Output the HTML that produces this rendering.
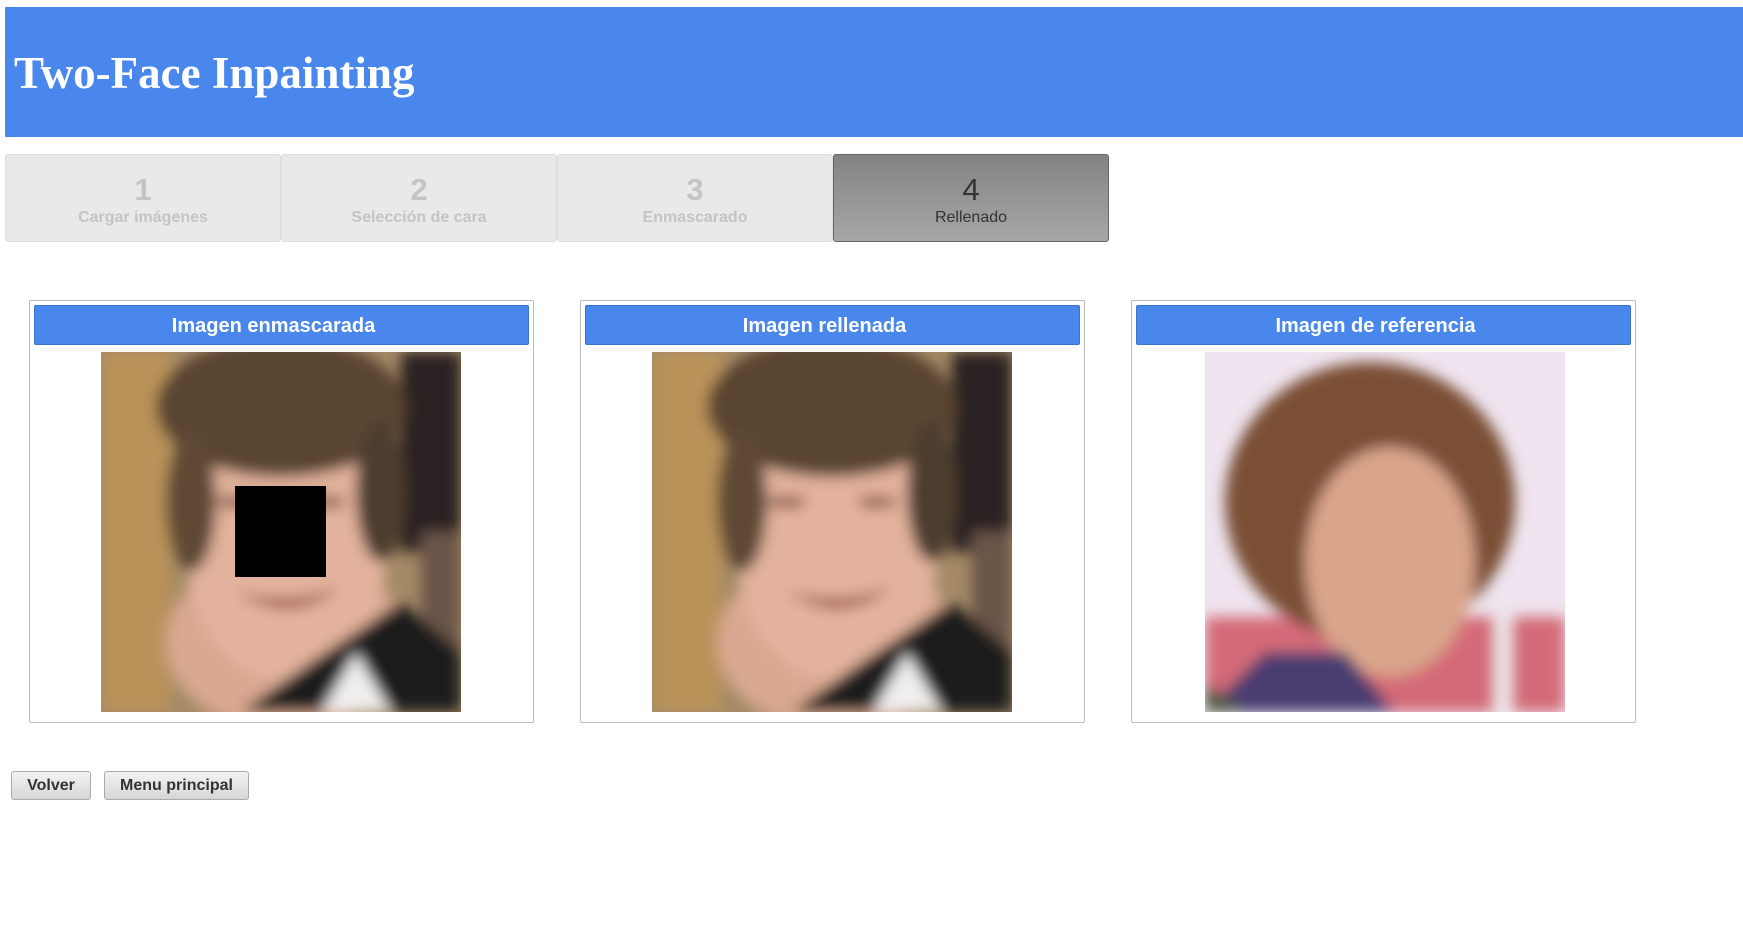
<!DOCTYPE html>
<html><head><meta charset="utf-8"><style>
*{box-sizing:border-box}
body{margin:0;width:1743px;height:952px;background:#fff;font-family:"Liberation Sans",sans-serif;position:relative;overflow:hidden}
.hdr{position:absolute;left:5px;top:7px;width:1738px;height:130px;background:#4987ec}
.hdr h1{margin:0;position:absolute;left:9px;top:40px;font-family:"Liberation Serif",serif;font-size:45px;font-weight:bold;color:#fff;line-height:52px}
.step{position:absolute;top:154px;height:88px;width:276px;background:#e9e9e9;border:1px solid #dedede;border-radius:3px;text-align:center;color:#c4c4c4}
.step .n{position:absolute;left:0;right:0;top:17px;font-size:31px;line-height:36px}
.step .l{position:absolute;left:0;right:0;top:53px;font-size:16px;line-height:20px}
.step.act{background:linear-gradient(#838383,#a7a7a7);border-color:#666;color:#333}
.panel{position:absolute;top:300px;width:505px;height:423px;border:1px solid #bbb;border-radius:2px}
.panel .t{position:absolute;left:4px;right:4px;top:4px;height:40px;background:#4987ec;border:1px solid #3a72cc;border-radius:2px;color:#fff;font-weight:bold;font-size:20px;text-align:center;line-height:41px;padding-right:16px}
.panel svg{position:absolute;top:51px;left:71px}
.btn{position:absolute;top:771px;height:29px;border:1px solid #aaa;border-radius:3px;background:linear-gradient(#f3f3f3,#d6d6d6);font-weight:bold;font-size:16px;color:#333;text-align:center;line-height:27px}
</style></head><body>
<div class="hdr"><h1>Two-Face Inpainting</h1></div>
<div class="step" style="left:5px"><div class="n" style="font-weight:bold">1</div><div class="l" style="font-weight:bold">Cargar imágenes</div></div>
<div class="step" style="left:281px"><div class="n" style="font-weight:bold">2</div><div class="l" style="font-weight:bold">Selección de cara</div></div>
<div class="step" style="left:557px"><div class="n" style="font-weight:bold">3</div><div class="l" style="font-weight:bold">Enmascarado</div></div>
<div class="step act" style="left:833px"><div class="n">4</div><div class="l">Rellenado</div></div>

<svg width="0" height="0" style="position:absolute"><defs>
<filter id="bl"><feGaussianBlur stdDeviation="7"/></filter>
<symbol id="face1" viewBox="0 0 360 360">
<rect width="360" height="360" fill="#a48a66"/>
<g filter="url(#bl)">
<rect x="0" y="0" width="70" height="360" fill="#b9925a"/>
<rect x="300" y="0" width="60" height="200" fill="#2a2420"/>
<rect x="320" y="180" width="40" height="180" fill="#6a5548"/>
<ellipse cx="185" cy="290" rx="120" ry="90" fill="#d8a890"/>
<ellipse cx="185" cy="200" rx="100" ry="130" fill="#e2b29c"/>
<ellipse cx="180" cy="55" rx="125" ry="70" fill="#5a4430"/>
<ellipse cx="90" cy="150" rx="25" ry="70" fill="#5e4836"/>
<ellipse cx="280" cy="140" rx="25" ry="70" fill="#4e3c2e"/>
<ellipse cx="135" cy="150" rx="20" ry="6" fill="#8a5a48"/>
<ellipse cx="225" cy="150" rx="20" ry="6" fill="#8a5a48"/>
<path d="M140 360 L210 310 L300 250 L360 300 L360 360Z" fill="#1f1c1c"/>
<path d="M220 360 L255 300 L290 360Z" fill="#f0eeee"/>
<path d="M135 240 Q190 275 240 235 Q190 255 135 240Z" fill="#9a4f4a"/>
</g>
</symbol>
<symbol id="face2" viewBox="0 0 360 360">
<rect width="360" height="360" fill="#efe4ef"/>
<g filter="url(#bl)">
<rect x="0" y="265" width="360" height="95" fill="#d46a78"/>
<rect x="290" y="265" width="16" height="95" fill="#eee"/>
<ellipse cx="165" cy="150" rx="145" ry="140" fill="#7a5034"/>
<ellipse cx="185" cy="210" rx="85" ry="115" fill="#d9a48a"/>
<path d="M0 360 L60 300 L140 300 L190 360Z" fill="#4a3c70"/>
<path d="M0 330 L40 360 L0 360Z" fill="#4c5a42"/>
</g>
</symbol>
</defs></svg>

<div class="panel" style="left:29px"><div class="t">Imagen enmascarada</div>
<svg width="360" height="360"><use href="#face1" width="360" height="360"/><rect x="134" y="134" width="91" height="91" fill="#000"/></svg></div>
<div class="panel" style="left:580px"><div class="t">Imagen rellenada</div>
<svg width="360" height="360"><use href="#face1" width="360" height="360"/></svg></div>
<div class="panel" style="left:1131px"><div class="t">Imagen de referencia</div>
<svg width="360" height="360" style="left:73px"><use href="#face2" width="360" height="360"/></svg></div>

<div class="btn" style="left:11px;width:80px">Volver</div>
<div class="btn" style="left:104px;width:145px">Menu principal</div>
</body></html>
